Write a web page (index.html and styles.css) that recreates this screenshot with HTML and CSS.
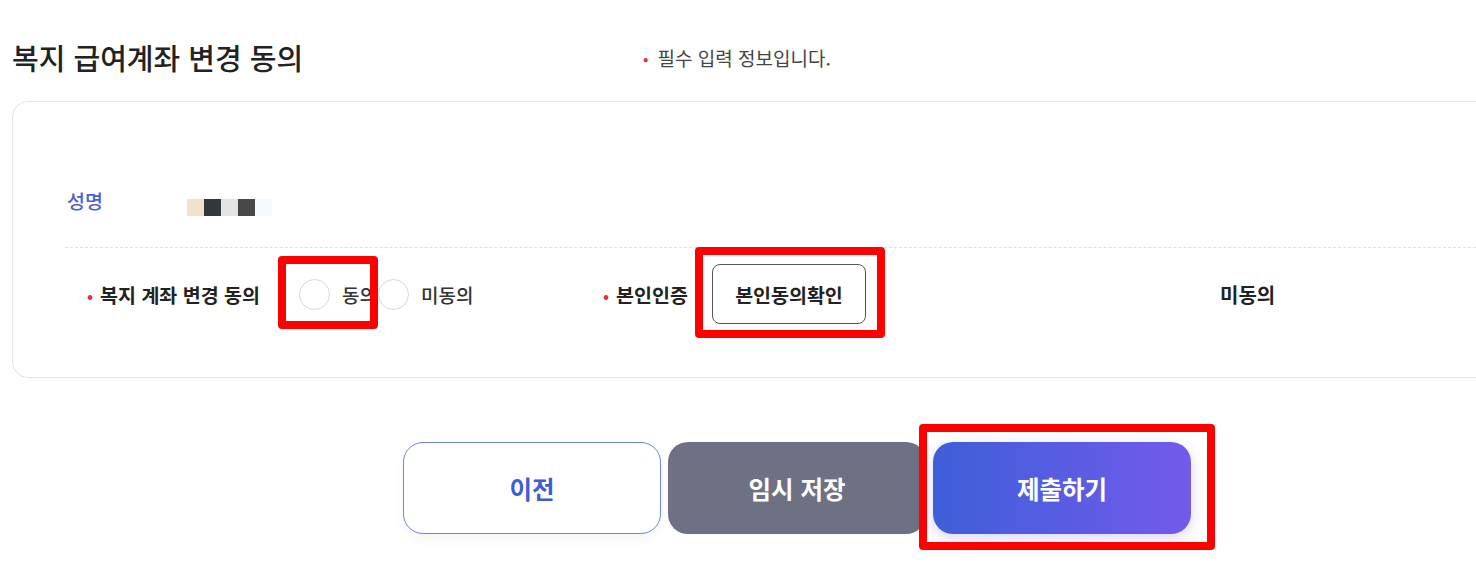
FILE: index.html
```html
<!DOCTYPE html>
<html lang="ko">
<head>
	<meta charset="UTF-8">
	<title>복지 급여계좌 변경 동의</title>
	<link rel="stylesheet" href="styles.css">
</head>
<body>
	<div class="page">
		<div class="head">
			<h2 class="title">복지 급여계좌 변경 동의</h2>
			<p class="note"><span class="req">•</span>필수 입력 정보입니다.</p>
		</div>

		<div class="card">
			<div class="nameRow">
				<span class="nameLabel">성명</span>
				<span class="blur">
					<i class="b1"></i><i class="b2"></i><i class="b3"></i><i class="b4"></i><i class="b5"></i>
				</span>
			</div>
			<div class="agreeRow">
				<div class="field field1">
					<span class="fieldLabel"><span class="req">•</span>복지 계좌 변경 동의</span>
					<label class="radio"><span class="circle"></span>동의</label>
					<label class="radio"><span class="circle"></span>미동의</label>
				</div>
				<div class="field field2">
					<span class="fieldLabel"><span class="req">•</span>본인인증</span>
					<button class="certBtn">본인동의확인</button>
				</div>
				<span class="status">미동의</span>
			</div>
		</div>

		<div class="btns">
			<button class="btn prev">이전</button>
			<button class="btn temp">임시 저장</button>
			<button class="btn submit">제출하기</button>
		</div>

		<!-- 강조 표시 -->
		<div class="mark mark1"></div>
		<div class="mark mark2"></div>
		<div class="mark mark3"></div>
	</div>
</body>
</html>
```

FILE: styles.css
```css
*{
	margin: 0;
	padding: 0;
	box-sizing: border-box;
}
body{
	background: #fff;
	font-family: "Noto Sans CJK KR", "Noto Sans", sans-serif;
	color: #222;
	overflow: hidden;
}
.page{
	position: relative;
	width: 1476px;
	height: 575px;
	padding: 22px 0 0 12px;
}
.head{
	display: flex;
	align-items: center;
	height: 70px;
}
.title{
	width: 631px;
	font-size: 29px;
	font-weight: 500;
	color: #222;
}
.note{
	font-size: 19px;
	color: #444;
}
.req{
	color: #e5323a;
	font-size: 16px;
	margin-right: 9px;
	position: relative;
	top: -1px;
}
.card{
	margin-top: 9px;
	width: 1500px;
	height: 277px;
	border: 1px solid #e2e2e2;
	border-radius: 16px;
	padding-left: 52px;
}
.nameRow{
	display: flex;
	height: 146px;
	padding-top: 84px;
	border-bottom: 1px dashed #e0e0e0;
}
.nameLabel{
	width: 122px;
	padding-left: 2px;
	line-height: 30px;
	font-size: 19.5px;
	font-weight: 500;
	color: #4a5fd9;
}
.blur{
	display: flex;
	margin-top: 13px;
	height: 17px;
}
.blur i{
	display: block;
	width: 17px;
	height: 17px;
}
.b1{ background: #f2e2cc; }
.b2{ background: #33373a; }
.b3{ background: #e4e4e4; }
.b4{ background: #474747; }
.b5{ background: #f6f9ff; }
.agreeRow{
	display: flex;
	align-items: center;
	height: 60px;
	margin-top: 16px;
}
.field{
	display: flex;
	align-items: center;
}
.field1{
	width: 538px;
	padding-left: 22px;
}
.field1 .fieldLabel{
	width: 212px;
}
.field2 .fieldLabel{
	width: 109px;
}
.fieldLabel{
	font-size: 19.5px;
	font-weight: 700;
	color: #222;
}
.fieldLabel .req{
	margin-right: 7px;
}
.radio{
	display: flex;
	align-items: center;
	font-size: 19px;
	font-weight: 500;
	color: #333;
	margin-right: 1px;
}
.circle{
	width: 31px;
	height: 31px;
	border: 1px solid #d9d9d9;
	border-radius: 50%;
	margin-right: 12px;
}
.certBtn{
	width: 154px;
	height: 60px;
	background: #fff;
	border: 1px solid #555;
	border-radius: 8px;
	font-family: inherit;
	font-size: 19.5px;
	font-weight: 700;
	color: #222;
}
.status{
	margin-left: 354px;
	font-size: 20px;
	font-weight: 700;
	color: #222;
}
.btns{
	display: flex;
	gap: 7px;
	margin-top: 64px;
	padding-left: 391px;
}
.btn{
	width: 258px;
	height: 92px;
	border-radius: 20px;
	font-family: inherit;
	font-size: 24.5px;
	font-weight: 700;
	border: none;
}
.prev{
	background: #fff;
	border: 1px solid #6f84ea;
	color: #3f5bd8;
	box-shadow: 0 6px 12px rgba(0, 0, 0, 0.04);
}
.temp{
	background: #6e7083;
	color: #fff;
}
.submit{
	background: linear-gradient(90deg, #3d5fd8, #735aeb);
	color: #fff;
	box-shadow: 0 4px 14px rgba(110, 90, 230, 0.25);
}
.mark{
	position: absolute;
	border: 8px solid #ff0000;
	border-radius: 4px;
}
.mark1{
	left: 278px;
	top: 256px;
	width: 100px;
	height: 73px;
}
.mark2{
	left: 695px;
	top: 247px;
	width: 190px;
	height: 91px;
}
.mark3{
	left: 919px;
	top: 424px;
	width: 296px;
	height: 126px;
}
```
